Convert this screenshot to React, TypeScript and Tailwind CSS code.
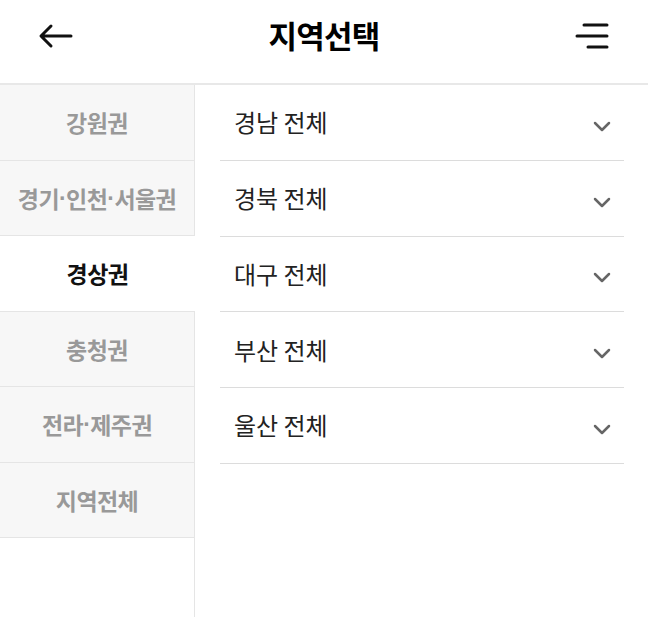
import React, { useState } from 'react';

const regions = ['강원권', '경기·인천·서울권', '경상권', '충청권', '전라·제주권', '지역전체'];
const cities = ['경남 전체', '경북 전체', '대구 전체', '부산 전체', '울산 전체'];

const font = { fontFamily: '"Noto Sans CJK KR", "Noto Sans", sans-serif' };

// the CJK font draws "·" full width; the reference uses a narrow dot
const RegionLabel: React.FC<{ text: string }> = ({ text }) => {
  const parts = text.split('·');
  return (
    <>
      {parts.map((p, i) => (
        <React.Fragment key={i}>
          {i > 0 && <span className="font-['Liberation_Sans',sans-serif] font-bold">·</span>}
          {p}
        </React.Fragment>
      ))}
    </>
  );
};

const App: React.FC = () => {
  const [selected, setSelected] = useState('경상권');

  return (
    <div className="w-[648px] h-[617px] bg-white flex flex-col overflow-hidden" style={font}>
      {/* Header */}
      <div className="h-[85px] flex items-center justify-between px-[38px] border-b-2 border-[#e8e8e8] shrink-0">
        <button className="w-[36px] h-[36px] flex items-center justify-center -mt-[12px]">
          <svg className="w-[36px] h-[28px]" viewBox="0 0 36 28" fill="none" stroke="#111" strokeWidth={3} strokeLinecap="round" strokeLinejoin="round">
            <path d="M33 14H4M13 4L3 14l10 10" />
          </svg>
        </button>
        <h1 className="text-[31px] font-bold text-black -mt-[12px] tracking-tight">지역선택</h1>
        <button className="w-[36px] h-[36px] flex items-center justify-center -mt-[12px]">
          <svg className="w-[34px] h-[30px]" viewBox="0 0 34 30" fill="none" stroke="#111" strokeWidth={3} strokeLinecap="round">
            <path d="M9 4h23M2 15h30M13 26h19" />
          </svg>
        </button>
      </div>

      <div className="flex flex-1 min-h-0">
        {/* Sidebar */}
        <div className="w-[195px] border-r border-[#e5e5e5] flex flex-col shrink-0">
          {regions.map(r => {
            const active = r === selected;
            return (
              <button
                key={r}
                onClick={() => setSelected(r)}
                className={`h-[75.5px] border-b border-[#e5e5e5] flex items-center justify-center text-[23px] font-bold tracking-tight ${
                  active ? 'bg-white text-[#111] -mr-px' : 'bg-[#f7f7f7] text-[#999]'
                }`}
              >
                <RegionLabel text={r} />
              </button>
            );
          })}
        </div>

        {/* City list */}
        <div className="flex-1 pl-[25px] pr-[24px]">
          {cities.map(c => (
            <div key={c} className="h-[75.75px] border-b border-[#dcdcdc] flex items-center justify-between pl-[14px] pr-[13px]">
              <span className="text-[24px] text-[#222]">{c}</span>
              <svg className="w-[18px] h-[11px] mt-[8px]" viewBox="0 0 18 11" fill="none" stroke="#666" strokeWidth={2.5} strokeLinecap="round" strokeLinejoin="round">
                <path d="M2 2l7 7 7-7" />
              </svg>
            </div>
          ))}
        </div>
      </div>
    </div>
  );
};

export default App;
